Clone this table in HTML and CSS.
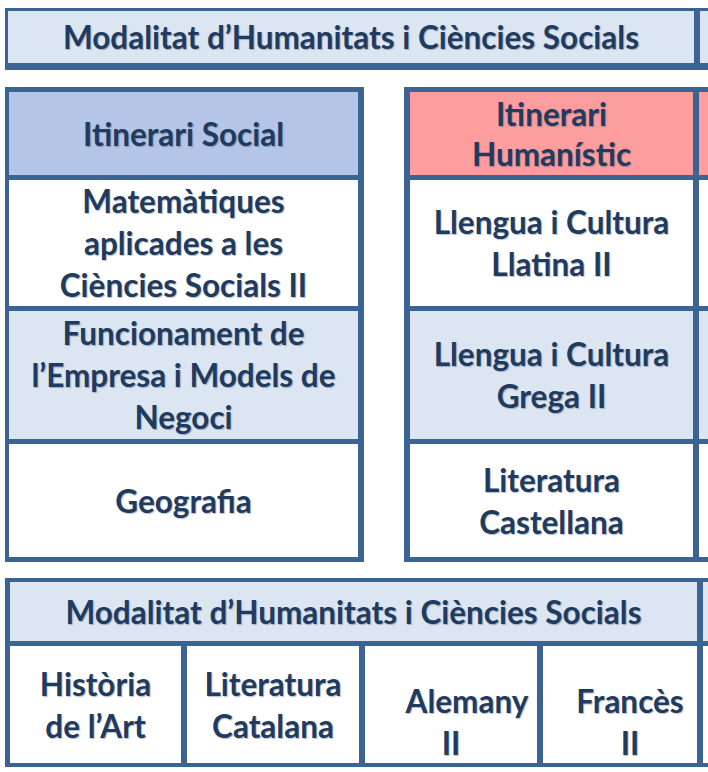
FILE: index.html
```html
<!DOCTYPE html>
<html lang="ca">
<head>
<meta charset="utf-8">
<title>Modalitat d’Humanitats i Ciències Socials</title>
<link rel="stylesheet" href="styles.css">
</head>
<body>
<div class="page">
  <div class="banner">
    <div class="cell light">Modalitat d’Humanitats i Ciències Socials</div>
    <div class="cell light"></div>
  </div>

  <div class="middle">
    <div class="itable social">
      <div class="cell head-social">Itinerari Social</div>
      <div class="cell white">Matemàtiques<br>aplicades a les<br>Ciències Socials II</div>
      <div class="cell light">Funcionament de<br>l’Empresa i Models de<br>Negoci</div>
      <div class="cell white">Geografia</div>
    </div>

    <div class="itable human">
      <div class="cell head-human">Itinerari<br>Humanístic</div>
      <div class="cell head-human"></div>
      <div class="cell white">Llengua i Cultura<br>Llatina II</div>
      <div class="cell white"></div>
      <div class="cell light">Llengua i Cultura<br>Grega II</div>
      <div class="cell light"></div>
      <div class="cell white">Literatura<br>Castellana</div>
      <div class="cell white"></div>
    </div>
  </div>

  <div class="bottom">
    <div class="cell light span4">Modalitat d’Humanitats i Ciències Socials</div>
    <div class="cell light"></div>
    <div class="cell white">Història<br>de l’Art</div>
    <div class="cell white">Literatura<br>Catalana</div>
    <div class="cell white low"><span class="line shift-a">Alemany</span><span class="line">II</span></div>
    <div class="cell white low shift-b"><span class="line">Francès</span><span class="line">II</span></div>
    <div class="cell white"></div>
  </div>
</div>
</body>
</html>
```

FILE: styles.css
```css
html, body {
  margin: 0;
  padding: 0;
  background: #ffffff;
  overflow: hidden;
}

.page {
  padding: 8px 0 0 5px;
  width: 1000px;
  font-family: "Lato", "Liberation Sans", sans-serif;
  font-weight: 700;
  font-size: 31.5px;
  line-height: 42px;
  color: #1f3b60;
}

.cell {
  display: flex;
  flex-direction: column;
  align-items: center;
  justify-content: center;
  text-align: center;
  white-space: nowrap;
  text-shadow: 1px 1px 1px rgba(20, 40, 70, 0.3);
}

.white { background: #ffffff; }
.light { background: #dce6f2; }
.head-social { background: #b4c5e7; }
.head-human { background: #fe9d9d; line-height: 40px; }

/* top banner */
.banner {
  display: grid;
  grid-template-columns: 686px 200px;
  grid-template-rows: 52px;
  column-gap: 6px;
  padding: 3px 0 7px 3px;
  background: #3b6495;
  width: max-content;
}

/* middle section */
.middle {
  display: flex;
  gap: 40px;
  margin-top: 17px;
  align-items: flex-start;
}

.itable {
  display: grid;
  grid-template-rows: 83px 126px 128px 113px;
  row-gap: 5px;
  background: #3b6495;
}

.social {
  grid-template-columns: 349px;
  padding: 5px 6px 5px 4px;
}

.human {
  grid-template-columns: 283px 200px;
  column-gap: 6px;
  padding: 5px 0 5px 6px;
}

/* bottom table */
.bottom {
  display: grid;
  grid-template-columns: 171px 172px 172px 154px 200px;
  grid-template-rows: 59px 117px;
  column-gap: 6px;
  row-gap: 5px;
  padding: 4px 0 4px 5px;
  margin-top: 16px;
  background: #3b6495;
  width: max-content;
}

.span4 { grid-column: 1 / 5; }

.line { display: block; }

.low { padding-top: 34px; box-sizing: border-box; }
.shift-a { padding-left: 32px; }
.shift-b { padding-left: 20px; }
```
